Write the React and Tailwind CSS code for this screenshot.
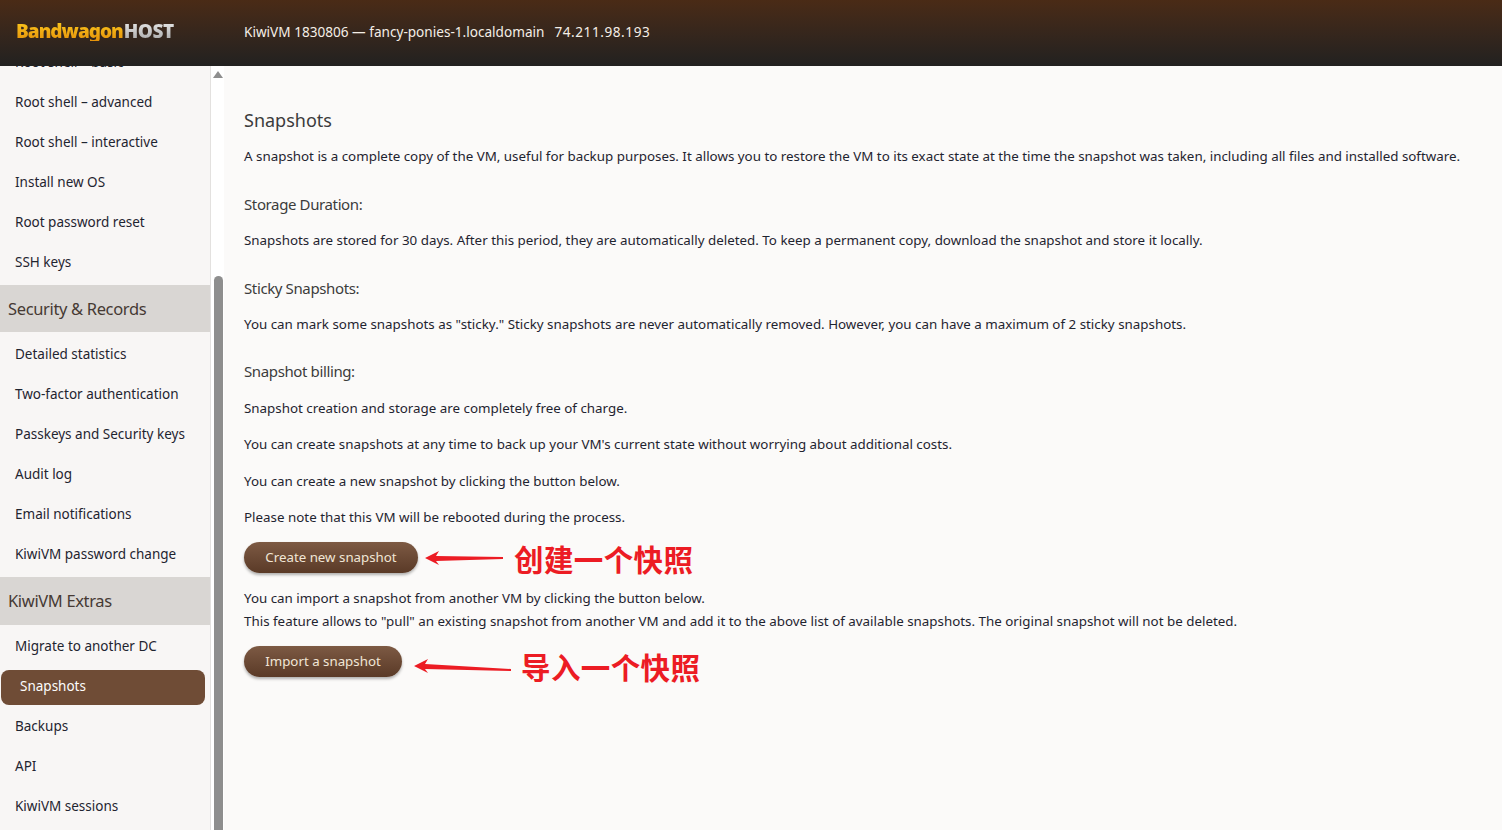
const font = "font-['Noto_Sans','Liberation_Sans',sans-serif]";

function Item({ children, active }) {
  if (active)
    return (
      <div className="h-[35px] mt-[4px] mb-[1px] ml-[1px] mr-[5px] pl-[19px] pb-[2px] flex items-center rounded-[8px] bg-[#6f4c36] text-[#fdfdfd] text-[13.5px]">
        {children}
      </div>
    );
  return <div className="h-[40px] pl-[15px] flex items-center text-[13.5px] text-[#1f2430]">{children}</div>;
}

function Section({ children, className }) {
  return (
    <div className={`pl-[8px] flex items-center bg-[#d9d6d3] text-[#463a34] text-[16.5px] tracking-[-0.35px] ${className}`}>
      {children}
    </div>
  );
}

function Arrow({ width, tail }) {
  return (
    <svg width={width} height="22" viewBox={`0 0 ${width} 22`} className="shrink-0">
      <path d={`M0 10 L14 3 L11 8 L${width} ${9 + tail} L${width} ${11 + tail} L11 13 L14 17 Z`} fill="#ec1c24" />
    </svg>
  );
}

function Btn({ children, className }) {
  return (
    <div className={`h-[31px] flex items-center justify-center rounded-full bg-gradient-to-b from-[#7d5a44] to-[#5a3a27] text-[#f1e6d6] text-[13.3px] shadow-[0_2px_3px_rgba(0,0,0,0.3)] ${className}`}>
      {children}
    </div>
  );
}

function Note({ children, className }) {
  return (
    <span className={`font-['Noto_Sans_CJK_SC',sans-serif] font-bold text-[29.5px] leading-none tracking-[0.4px] text-[#ec1c24] ${className}`}>
      {children}
    </span>
  );
}

const P = ({ className, children }) => <p className={`text-[13.36px] leading-[20px] text-[#1f2430] ${className}`}>{children}</p>;
const H = ({ className, children }) => <h3 className={`text-[15px] tracking-[-0.38px] leading-[20px] text-[#3c3c3c] ${className}`}>{children}</h3>;

export default function App() {
  return (
    <div className={`h-[830px] w-[1502px] overflow-hidden flex flex-col bg-[#fbfaf9] ${font}`}>
      <header className="h-[66px] shrink-0 flex items-center bg-gradient-to-b from-[#4a2b16] to-[#222120]">
        <div className="w-[244px] pl-[16px] text-[19px] font-black leading-none -mt-[4px] flex">
          <span className="mr-[1px] tracking-[-1px] bg-gradient-to-b from-[#fbc61c] to-[#e5920a] bg-clip-text text-transparent">Bandwagon</span>
          <span className="tracking-[-0.5px] bg-gradient-to-b from-[#e6e6e6] to-[#a9a9a9] bg-clip-text text-transparent">HOST</span>
        </div>
        <span className="pb-[1px] text-[13.6px] text-[#f4eee6]">KiwiVM 1830806 — fancy-ponies-1.localdomain</span>
        <span className="pb-[1px] text-[13.6px] tracking-[0.55px] text-[#f4eee6] ml-[10px]">74.211.98.193</span>
      </header>
      <div className="flex-1 flex min-h-0">
        <aside className="w-[211px] shrink-0 overflow-hidden bg-[#f8f6f5] border-r border-[#e3e1df]">
          <div className="-mt-[24px]">
            <Item>Root shell – basic</Item>
            <Item>Root shell – advanced</Item>
            <Item>Root shell – interactive</Item>
            <Item>Install new OS</Item>
            <Item>Root password reset</Item>
            <Item>SSH keys</Item>
            <Section className="h-[47px] pt-[1px] mt-[3px] mb-[2px]">Security &amp; Records</Section>
            <Item>Detailed statistics</Item>
            <Item>Two-factor authentication</Item>
            <Item>Passkeys and Security keys</Item>
            <Item>Audit log</Item>
            <Item>Email notifications</Item>
            <Item>KiwiVM password change</Item>
            <Section className="h-[48px] mt-[3px] mb-[1px]">KiwiVM Extras</Section>
            <Item>Migrate to another DC</Item>
            <Item active>Snapshots</Item>
            <Item>Backups</Item>
            <Item>API</Item>
            <Item>KiwiVM sessions</Item>
          </div>
        </aside>
        <div className="w-[13px] shrink-0 bg-white flex flex-col items-center pt-[5px] pl-[1px]">
          <div className="w-0 h-0 border-l-[5px] border-r-[5px] border-b-[7px] border-l-transparent border-r-transparent border-b-[#8e8e8e]" />
          <div className="w-[9px] mt-[198px] flex-1 rounded-t-[5px] bg-[#8e8e8e]" />
        </div>
        <main className="flex-1 pl-[20px] pt-[42px]">
          <h2 className="text-[18px] leading-[24px] text-[#3c3c3c]">Snapshots</h2>
          <P className="mt-[14px]">A snapshot is a complete copy of the VM, useful for backup purposes. It allows you to restore the VM to its exact state at the time the snapshot was taken, including all files and installed software.</P>
          <H className="mt-[28px]">Storage Duration:</H>
          <P className="mt-[16px]">Snapshots are stored for 30 days. After this period, they are automatically deleted. To keep a permanent copy, download the snapshot and store it locally.</P>
          <H className="mt-[28px]">Sticky Snapshots:</H>
          <P className="mt-[16px]">You can mark some snapshots as "sticky." Sticky snapshots are never automatically removed. However, you can have a maximum of 2 sticky snapshots.</P>
          <H className="mt-[27px]">Snapshot billing:</H>
          <P className="mt-[17px]">Snapshot creation and storage are completely free of charge.</P>
          <P className="mt-[16px]">You can create snapshots at any time to back up your VM's current state without worrying about additional costs.</P>
          <P className="mt-[17px]">You can create a new snapshot by clicking the button below.</P>
          <P className="mt-[16px]">Please note that this VM will be rebooted during the process.</P>
          <div className="mt-[15px] flex items-center h-[31px]">
            <Btn className="w-[174px]">Create new snapshot</Btn>
            <div className="ml-[7px] mr-[11px] mt-[2px] flex"><Arrow width={78} tail={0} /></div>
            <Note className="mt-[3px]">创建一个快照</Note>
          </div>
          <P className="mt-[15px]">You can import a snapshot from another VM by clicking the button below.</P>
          <P className="mt-[3px]">This feature allows to "pull" an existing snapshot from another VM and add it to the above list of available snapshots. The original snapshot will not be deleted.</P>
          <div className="mt-[15px] flex items-center h-[31px]">
            <Btn className="w-[158px]">Import a snapshot</Btn>
            <div className="ml-[12px] mr-[10px] mt-[10px] flex"><Arrow width={97} tail={4} /></div>
            <Note className="mt-[11px]">导入一个快照</Note>
          </div>
        </main>
      </div>
    </div>
  );
}
